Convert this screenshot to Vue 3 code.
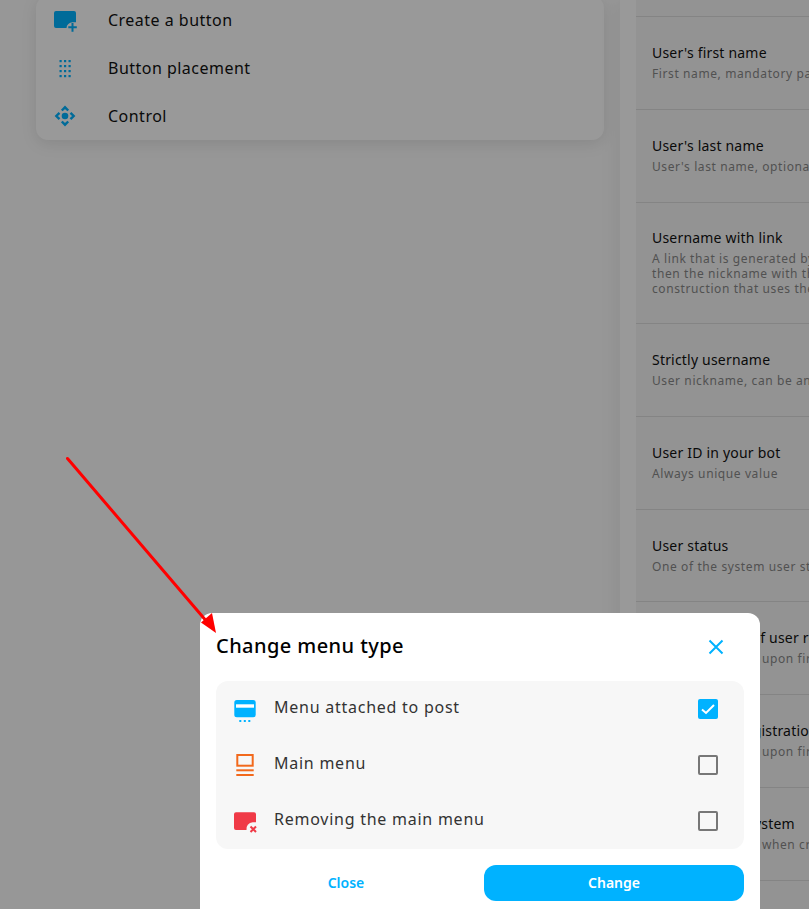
<script setup>
const tools = [
  { id: 'create', label: 'Create a button' },
  { id: 'grid', label: 'Button placement' },
  { id: 'control', label: 'Control' },
]
const fields = [
  { title: "User's first name", desc: ['First name, mandatory parameter of every user'] },
  { title: "User's last name", desc: ["User's last name, optional parameter of the profile"] },
  { title: 'Username with link', desc: ['A link that is generated by the system from the name,', 'then the nickname with the at sign and the', 'construction that uses the user ID in the bot'] },
  { title: 'Strictly username', desc: ['User nickname, can be any value or empty'] },
  { title: 'User ID in your bot', desc: ['Always unique value'] },
  { title: 'User status', desc: ['One of the system user statuses in the bot'] },
  { title: 'Date and time of user registration', desc: ['Set in the system upon first launch of the bot'] },
  { title: 'User date of registration', desc: ['Set in the system upon first launch of the bot'] },
  { title: "User's tags in system", desc: ['Set in the system when creating a user'] },
]
const menuTypes = [
  { id: 'post', label: 'Menu attached to post', checked: true },
  { id: 'main', label: 'Main menu', checked: false },
  { id: 'remove', label: 'Removing the main menu', checked: false },
]
const dots = []
for (let y = 0; y < 4; y++) for (let x = 0; x < 3; x++) dots.push({ x: 6.5 + x * 4.5, y: 5 + y * 5 })
</script>

<template>
  <div class="page">
    <div class="left">
      <div class="card">
        <div v-for="t in tools" :key="t.id" class="tool">
          <svg class="tool-icon" width="24" height="26" viewBox="0 0 24 26">
            <template v-if="t.id === 'create'">
              <path fill="#00b2ff" d="M3 4h18a2 2 0 0 1 2 2V15.200h-3.500a6 6 0 0 0-6 5.800H3a2 2 0 0 1-2-2V6a2 2 0 0 1 2-2z" />
              <path fill="#00b2ff" d="M18.500 16h2v3.300h3.300v2h-3.300v3.400h-2v-3.400h-3.200v-2h3.200z" />
            </template>
            <template v-else-if="t.id === 'grid'">
              <rect v-for="(d, i) in dots" :key="i" :x="d.x" :y="d.y" width="2.200" height="2.200" fill="#00b2ff" />
            </template>
            <template v-else>
              <circle cx="12" cy="13" r="3.300" fill="#00b2ff" />
              <path fill="none" stroke="#00b2ff" stroke-width="2.400" d="M8.800 7.500L12 4.300l3.200 3.200M8.800 18.500L12 21.700l3.200-3.200M6.500 9.800L3.300 13l3.200 3.200M17.500 9.800L20.700 13l-3.200 3.200" />
            </template>
          </svg>
          <span class="tool-label">{{ t.label }}</span>
        </div>
      </div>
    </div>
    <div class="side">
      <div class="list">
        <div class="list-top"></div>
        <div v-for="f in fields" :key="f.title" class="field" :class="{ multi: f.desc.length > 1 }">
          <div class="field-title">{{ f.title }}</div>
          <div v-for="line in f.desc" :key="line" class="field-desc">{{ line }}</div>
        </div>
      </div>
    </div>

    <div class="overlay"></div>

    <div class="modal">
      <div class="modal-head">
        <span class="modal-title">Change menu type</span>
        <svg width="24" height="24" viewBox="0 0 24 24" class="close-x">
          <path d="M5.500 5.500l13 13M18.500 5.500l-13 13" stroke="#00b2ff" stroke-width="2" fill="none" />
        </svg>
      </div>
      <div class="types">
        <div v-for="m in menuTypes" :key="m.id" class="type">
          <svg class="type-icon" width="24" height="26" viewBox="0 0 24 26">
            <template v-if="m.id === 'post'">
              <rect x="1.300" y="4" width="21.400" height="17.300" rx="2.500" fill="#00b2ff" />
              <rect x="3" y="8.300" width="18" height="3.400" fill="#fff" />
              <rect x="6.300" y="24" width="2" height="2" fill="#00b2ff" />
              <rect x="10.800" y="24" width="2" height="2" fill="#00b2ff" />
              <rect x="15.300" y="24" width="2" height="2" fill="#00b2ff" />
            </template>
            <template v-else-if="m.id === 'main'">
              <rect x="4.300" y="3" width="15.400" height="10.700" fill="none" stroke="#f2691c" stroke-width="2" />
              <rect x="3.300" y="17.300" width="17.400" height="2" fill="#f2691c" />
              <rect x="3.300" y="22" width="17.400" height="2" fill="#f2691c" />
            </template>
            <template v-else>
              <path fill="#f03a47" d="M3 4.300h18a2 2 0 0 1 2 2V14.300h-3.300a6.500 6.500 0 0 0-6.200 7.700H3a2 2 0 0 1-2-2V6.300a2 2 0 0 1 2-2z" />
              <path d="M17.500 18.500l5.500 5.500M23 18.500l-5.500 5.500" stroke="#f03a47" stroke-width="2" fill="none" />
            </template>
          </svg>
          <span class="type-label">{{ m.label }}</span>
          <span class="check" :class="{ on: m.checked }">
            <svg v-if="m.checked" width="20" height="20" viewBox="0 0 20 20">
              <path d="M4 10.500l4 3.500 8-8" stroke="#fff" stroke-width="2" fill="none" />
            </svg>
          </span>
        </div>
      </div>
      <div class="actions">
        <button class="btn ghost">Close</button>
        <button class="btn solid">Change</button>
      </div>
    </div>

    <svg class="arrow" width="809" height="909" viewBox="0 0 809 909">
      <path d="M67.500 458.500L208 623" stroke="#ff0000" stroke-width="3" stroke-linecap="round" fill="none" />
      <path d="M216 633L201 622.500L212 613z" fill="#ff0000" />
    </svg>
  </div>
</template>

<style scoped>
.page {
  position: relative;
  width: 809px;
  height: 909px;
  overflow: hidden;
  display: flex;
  background: #ffffff;
  font-family: "Noto Sans", sans-serif;
  color: #000;
}
.left {
  width: 620px;
  flex: none;
  padding: 0 16px 0 36px;
  box-sizing: border-box;
  background: #fcfcfc;
}
.card {
  margin-top: -4px;
  background: #ffffff;
  border-radius: 12px;
  box-shadow: 0 4px 16px rgba(0, 0, 0, 0.1);
}
.tool {
  height: 48px;
  display: flex;
  align-items: center;
  padding-left: 17px;
}
.tool-icon { flex: none; }
.tool-label {
  margin-left: 31px;
  font-size: 16px;
  letter-spacing: 0.48px;
  color: #111;
}
.side {
  flex: none;
  width: 400px;
  padding-left: 16px;
  background: #ffffff;
  box-shadow: -6px 0 16px rgba(0, 0, 0, 0.05);
}
.list {
  background: #f6f6f6;
  min-height: 909px;
}
.list-top {
  height: 16px;
  border-bottom: 1px solid #dcdcdc;
}
.field {
  box-sizing: border-box;
  padding: 26px 16px 27.750px;
  border-bottom: 1px solid #dcdcdc;
  white-space: nowrap;
}
.field.multi {
  padding-top: 25px;
  padding-bottom: 27.600px;
}
.field-title {
  font-size: 14px;
  line-height: 20px;
  margin-bottom: 3px;
  letter-spacing: 0.2px;
  color: #111;
}
.field-desc {
  font-size: 12px;
  line-height: 15px;
  letter-spacing: 0.6px;
  color: #888;
}
.overlay {
  position: absolute;
  inset: 0;
  background: rgba(0, 0, 0, 0.4);
}
.modal {
  position: absolute;
  left: 200px;
  top: 613px;
  width: 560px;
  height: 320px;
  box-sizing: border-box;
  padding: 0 16px;
  background: #fff;
  border-radius: 12px;
}
.modal-head {
  height: 68px;
  display: flex;
  align-items: center;
  justify-content: space-between;
}
.modal-title {
  padding-bottom: 4px;
  font-size: 20px;
  font-weight: 500;
  letter-spacing: 0.43px;
  color: #000;
}
.close-x { margin-right: 16px; }
.types {
  background: #f7f7f7;
  border-radius: 12px;
}
.type {
  height: 56px;
  display: flex;
  align-items: center;
  padding: 0 26px 0 17px;
}
.type-icon { flex: none; }
.type-label {
  flex: 1;
  margin-left: 17px;
  margin-top: -4px;
  font-size: 16px;
  letter-spacing: 0.75px;
  color: #333;
}
.check {
  width: 20px;
  height: 20px;
  box-sizing: border-box;
  border: 2px solid #777;
  border-radius: 2px;
  display: block;
}
.check.on {
  border: none;
  background: #00b2ff;
}
.actions {
  margin-top: 16px;
  display: grid;
  grid-template-columns: 1fr 1fr;
  gap: 8px;
}
.btn {
  height: 36px;
  border: none;
  border-radius: 12px;
  font-family: inherit;
  font-size: 14px;
  font-weight: 600;
  padding: 0 0 2px;
}
.ghost { background: transparent; color: #00b2ff; }
.solid { background: #00b2ff; color: #fff; }
.arrow {
  position: absolute;
  left: 0;
  top: 0;
  pointer-events: none;
}
</style>
